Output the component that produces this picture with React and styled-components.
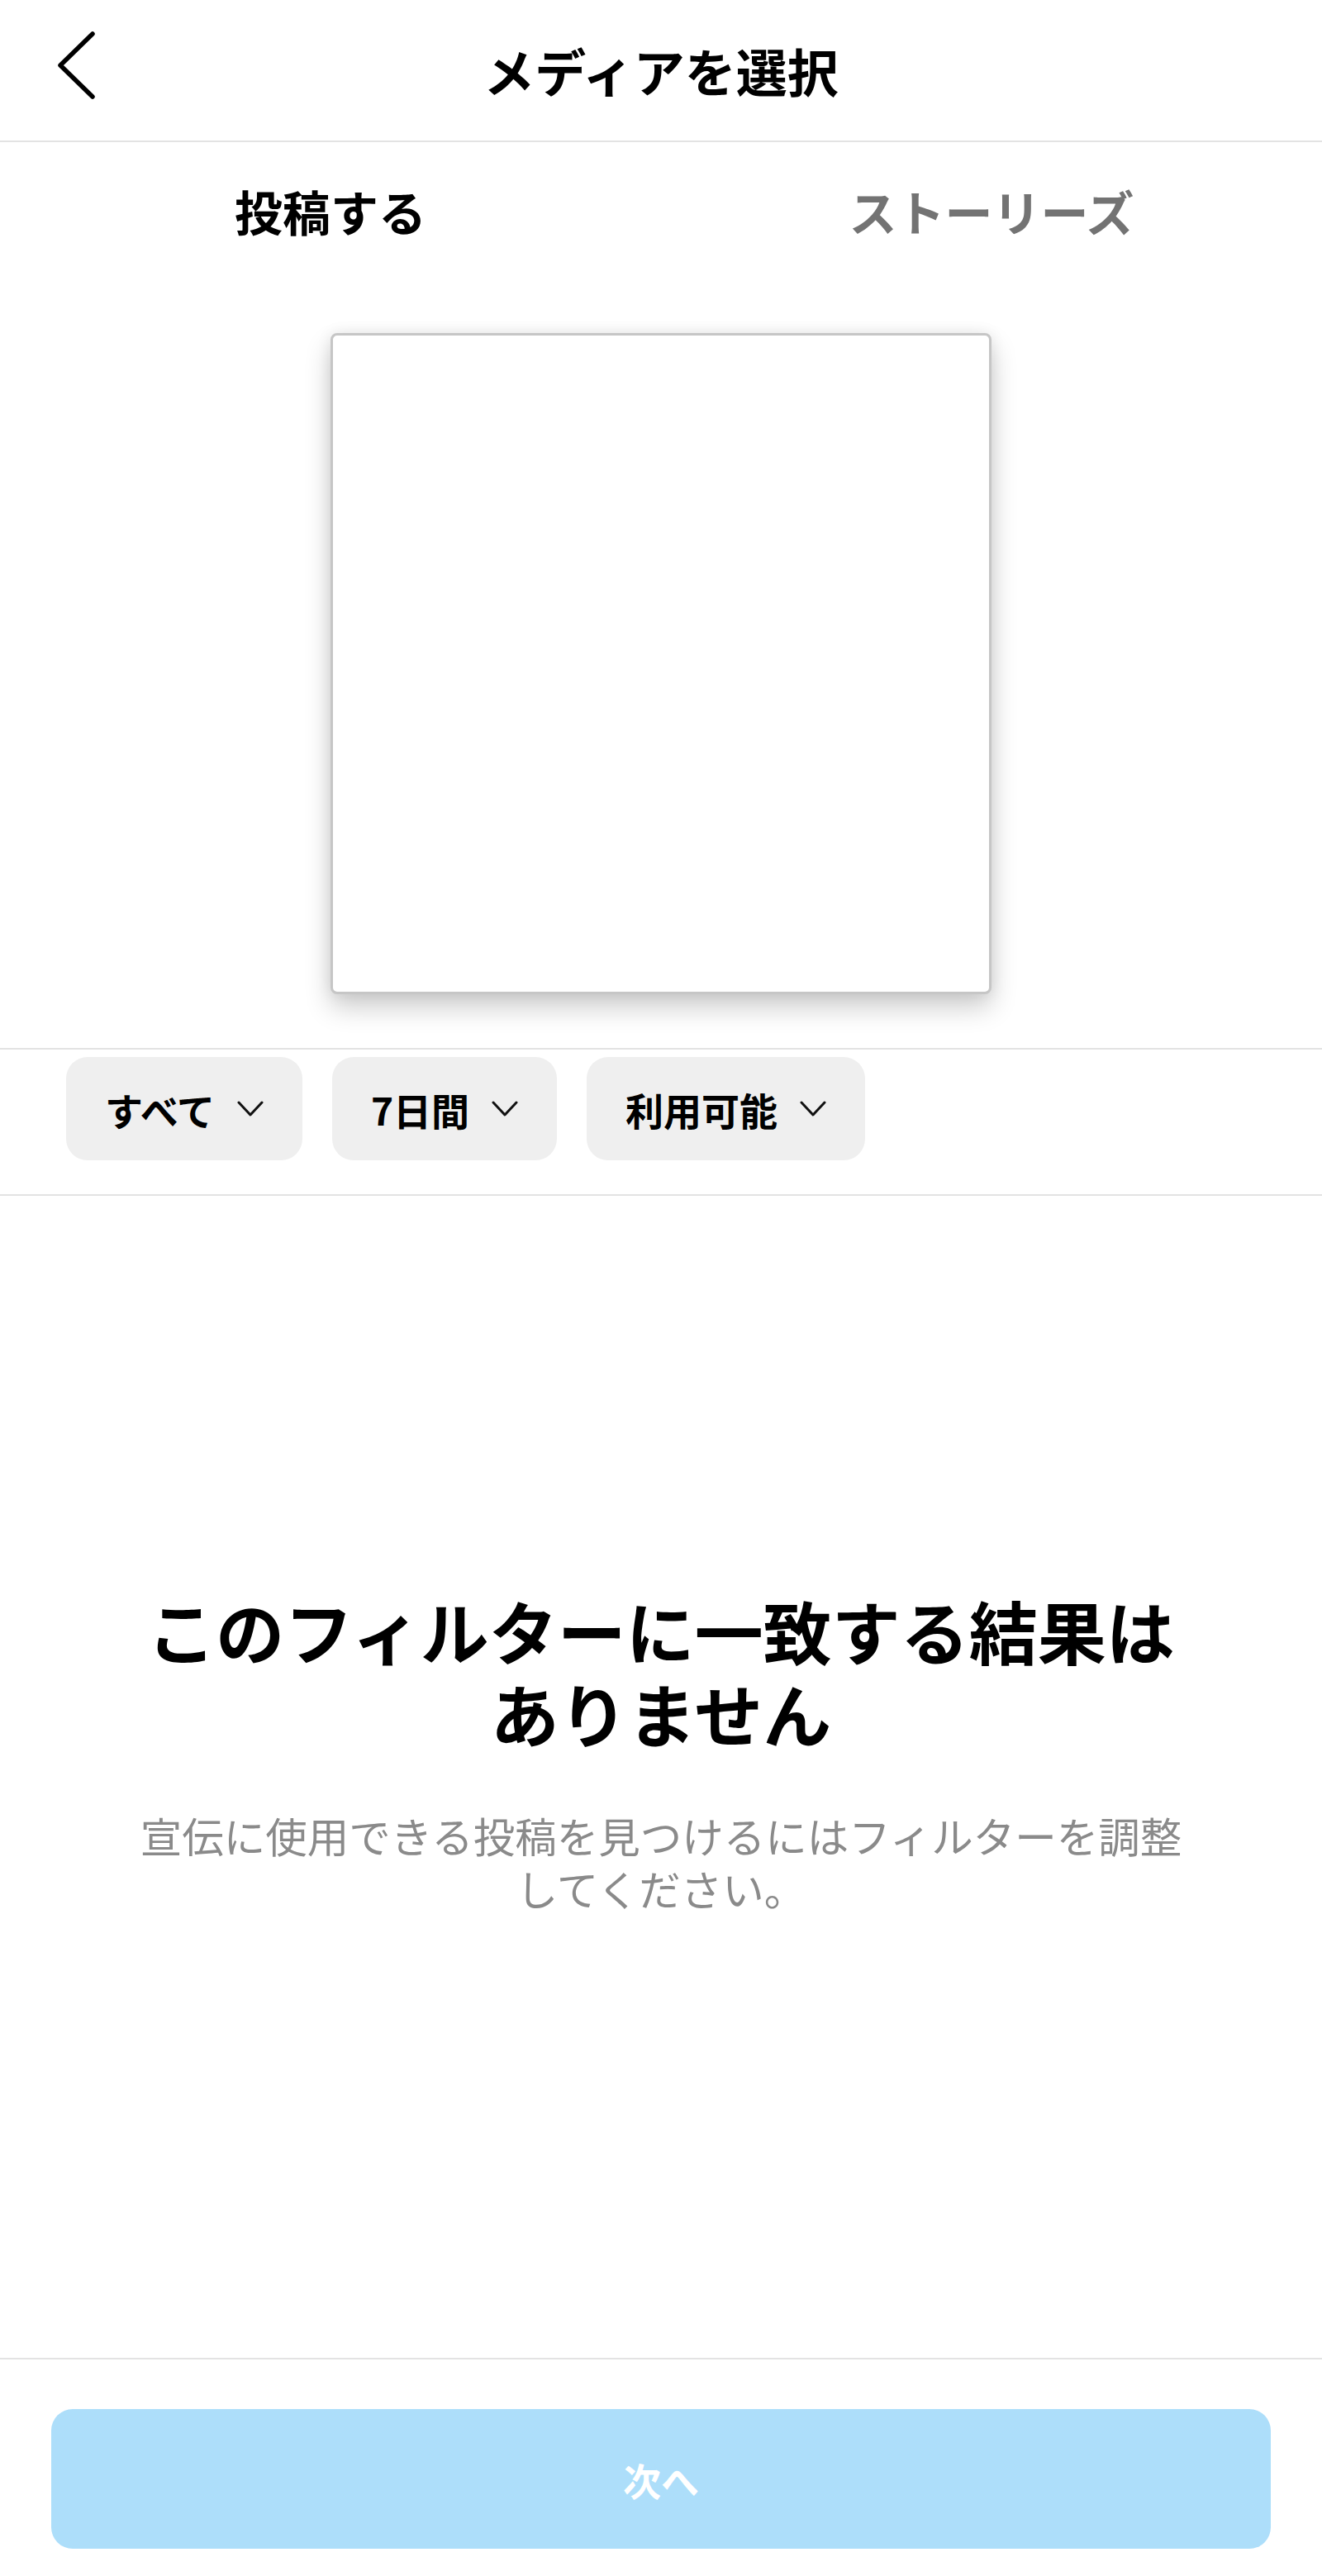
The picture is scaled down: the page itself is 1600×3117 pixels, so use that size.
import React from "react";
import styled, { createGlobalStyle } from "styled-components";

const Global = createGlobalStyle`
  html, body { margin: 0; padding: 0; background: #ffffff; }
  body { font-family: "Noto Sans CJK JP", "Noto Sans", sans-serif; color: #000; }
  * { box-sizing: border-box; }
`;

const Page = styled.div`
  min-height: 3117px;
  display: flex;
  flex-direction: column;
  background: #fff;
`;

const Header = styled.header`
  height: 172px;
  display: grid;
  grid-template-columns: 1fr auto 1fr;
  align-items: center;
  border-bottom: 2px solid #e3e3e3;
`;

const BackButton = styled.button`
  justify-self: start;
  background: none;
  border: none;
  padding: 0;
  margin: -12px 0 0 68px;
  display: flex;
  cursor: pointer;
`;

const Title = styled.h1`
  margin: 0;
  font-size: 62px;
  font-weight: 700;
  line-height: 1;
  letter-spacing: 0;
`;

const Tabs = styled.nav`
  height: 166px;
  display: grid;
  grid-template-columns: 1fr 1fr;
  align-items: center;
`;

const Tab = styled.div`
  text-align: center;
  font-size: 58px;
  font-weight: 700;
  line-height: 1;
  color: ${(p) => (p.$active ? "#000" : "#737373")};
`;

const PreviewArea = styled.section`
  display: flex;
  justify-content: center;
  padding: 65px 0 65px;
  border-bottom: 2px solid #e3e3e3;
`;

const PreviewCard = styled.div`
  width: 800px;
  height: 800px;
  background: #fff;
  border: 3px solid #c6c6c6;
  border-radius: 8px;
  box-shadow: 0 16px 32px rgba(0, 0, 0, 0.2), 0 0 18px rgba(0, 0, 0, 0.08);
`;

const FilterRow = styled.div`
  display: flex;
  gap: 36px;
  padding: 9px 0 41px 80px;
  border-bottom: 2px solid #e3e3e3;
`;

const Chip = styled.button`
  height: 125px;
  display: flex;
  align-items: center;
  gap: 27px;
  padding: 0 47px;
  border: none;
  border-radius: 26px;
  background: #efefef;
  font-family: inherit;
  font-size: 46px;
  font-weight: 700;
  color: #000;
  line-height: 1;
  cursor: pointer;
`;

const Empty = styled.section`
  flex: 1;
  display: flex;
  flex-direction: column;
  align-items: center;
  justify-content: center;
  padding: 0 150px 62px;
  text-align: center;
`;

const EmptyTitle = styled.h2`
  margin: 0;
  font-size: 83px;
  font-weight: 700;
  line-height: 100px;
  max-width: 1280px;
`;

const EmptyText = styled.p`
  margin: 66px 0 0;
  font-size: 50.5px;
  font-weight: 400;
  line-height: 64px;
  color: #8a8a8a;
  max-width: 1300px;
`;

const Footer = styled.footer`
  border-top: 2px solid #e3e3e3;
  padding: 60px 62px 33px;
`;

const NextButton = styled.button`
  width: 100%;
  height: 169px;
  border: none;
  border-radius: 26px;
  background: #addefa;
  color: #fff;
  font-family: inherit;
  font-size: 46px;
  font-weight: 700;
  line-height: 1;
`;

const Chevron = () => (
  <svg width="32" height="20" viewBox="0 0 32 20" fill="none">
    <polyline
      points="2,2 16,17 30,2"
      stroke="#111"
      strokeWidth="3"
      strokeLinecap="round"
      strokeLinejoin="round"
    />
  </svg>
);

const BackIcon = () => (
  <svg width="50" height="84" viewBox="0 0 50 84" fill="none">
    <polyline
      points="44,4 5,42 44,80"
      stroke="#000"
      strokeWidth="5.5"
      strokeLinecap="round"
      strokeLinejoin="round"
    />
  </svg>
);

export default function App() {
  return (
    <>
      <Global />
      <Page>
        <Header>
          <BackButton aria-label="戻る">
            <BackIcon />
          </BackButton>
          <Title>メディアを選択</Title>
          <span />
        </Header>
        <Tabs>
          <Tab $active>投稿する</Tab>
          <Tab>ストーリーズ</Tab>
        </Tabs>
        <PreviewArea>
          <PreviewCard />
        </PreviewArea>
        <FilterRow>
          <Chip>
            すべて
            <Chevron />
          </Chip>
          <Chip>
            7日間
            <Chevron />
          </Chip>
          <Chip>
            利用可能
            <Chevron />
          </Chip>
        </FilterRow>
        <Empty>
          <EmptyTitle>このフィルターに一致する結果はありません</EmptyTitle>
          <EmptyText>
            宣伝に使用できる投稿を見つけるにはフィルターを調整してください。
          </EmptyText>
        </Empty>
        <Footer>
          <NextButton disabled>次へ</NextButton>
        </Footer>
      </Page>
    </>
  );
}
